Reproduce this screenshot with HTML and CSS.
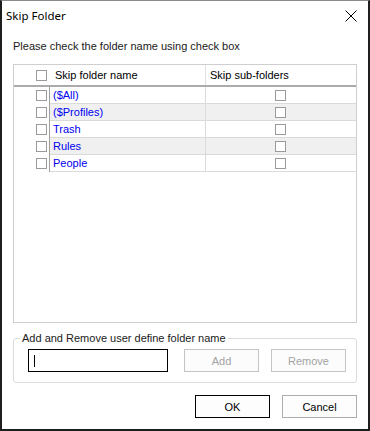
FILE: index.html
```html
<!DOCTYPE html>
<html>
<head>
<meta charset="utf-8">
<link rel="stylesheet" href="styles.css">
</head>
<body>
<div class="window">
  <div class="titlebar">
    <span class="title">Skip Folder</span>
    <svg class="close" width="12" height="12" viewBox="0 0 12 12"><path d="M0.5 0.5 L11.5 11.5 M11.5 0.5 L0.5 11.5" stroke="#000" stroke-width="1" fill="none"/></svg>
  </div>
  <div class="content">
    <div class="intro">Please check the folder name using check box</div>
    <div class="grid">
      <div class="row head">
        <div class="rh"><span class="cb"></span></div>
        <div class="c name">Skip folder name</div>
        <div class="c sub">Skip sub-folders</div>
      </div>
      <div class="row">
        <div class="rh"><span class="cb"></span></div>
        <div class="c name">($All)</div>
        <div class="c sub"><span class="cb"></span></div>
      </div>
      <div class="row alt">
        <div class="rh"><span class="cb"></span></div>
        <div class="c name">($Profiles)</div>
        <div class="c sub"><span class="cb"></span></div>
      </div>
      <div class="row">
        <div class="rh"><span class="cb"></span></div>
        <div class="c name">Trash</div>
        <div class="c sub"><span class="cb"></span></div>
      </div>
      <div class="row alt">
        <div class="rh"><span class="cb"></span></div>
        <div class="c name">Rules</div>
        <div class="c sub"><span class="cb"></span></div>
      </div>
      <div class="row">
        <div class="rh"><span class="cb"></span></div>
        <div class="c name">People</div>
        <div class="c sub"><span class="cb"></span></div>
      </div>
    </div>
    <fieldset class="group">
      <legend>Add and Remove user define folder name</legend>
      <div class="group-row">
        <div class="input"><span class="caret"></span></div>
        <button class="btn disabled add">Add</button>
        <button class="btn disabled remove">Remove</button>
      </div>
    </fieldset>
    <div class="actions">
      <button class="btn default">OK</button>
      <button class="btn">Cancel</button>
    </div>
  </div>
</div>
</body>
</html>
```
FILE: styles.css
```css
* { box-sizing: border-box; }
html, body { margin: 0; padding: 0; background: #fff; }
body { font-family: "Liberation Sans", Arial, sans-serif; font-size: 11px; color: #000; }

.window {
  width: 370px;
  height: 431px;
  border: 2px solid #1e1e1e;
  border-top: 1px solid #8a8a8a;
  background: #fff;
}

.titlebar {
  height: 29px;
  display: flex;
  align-items: center;
  justify-content: space-between;
  padding: 0 11px 0 4px;
}
.title {
  font-family: "Noto Sans", "Liberation Sans", sans-serif;
  font-size: 11.5px;
  color: #000;
}
.close { display: block; }

.content { padding: 0 11px; }

.intro {
  margin-top: 10px;
  line-height: 13px;
  height: 13px;
  color: #1a1a1a;
}

.grid {
  margin-top: 11px;
  height: 259px;
  border: 1px solid #cfcfcf;
  background: #fff;
}

.row {
  display: grid;
  grid-template-columns: 36px 156px 150px;
  height: 17px;
}
.row.head {
  height: 22px;
  border-bottom: 2px solid #ababab;
}
.rh {
  display: flex;
  align-items: center;
  padding-left: 22px;
  border-right: 1px solid #a0a0a0;
  background: #fff;
}
.head .rh { border-right: none; }
.c {
  display: flex;
  align-items: center;
  border-bottom: 1px solid #dadada;
  line-height: 16px;
}
.head .c { border-bottom: none; }
.name {
  padding-left: 3px;
  border-right: 1px solid #dadada;
  color: #0000f0;
}
.head .name { padding-left: 5px; color: #000; border-right: 1px solid #e0e0e0; }
.sub { justify-content: center; }
.head .sub { justify-content: flex-start; padding-left: 4px; color: #000; }
.alt .c { background: #f0f0f0; }

.cb {
  display: block;
  width: 11px;
  height: 11px;
  border: 1px solid #9a9a9a;
  background: #fff;
}
.sub .cb { margin-left: -2px; }

.group {
  margin: 9px 0 0 0;
  padding: 4px 9px 10px 6px;
  border: 1px solid #dcdcdc;
  border-radius: 3px;
  min-width: 0;
}
.group legend {
  padding: 0 2px;
  margin-left: 0;
  line-height: 13px;
  color: #1a1a1a;
}
.group-row {
  display: flex;
  align-items: center;
  padding-left: 8px;
}
.input {
  width: 140px;
  height: 23px;
  border: 1px solid #000;
  background: #fff;
  display: flex;
  align-items: center;
  padding-left: 5px;
}
.caret {
  display: block;
  width: 1px;
  height: 12px;
  background: #000;
}

.btn {
  font-family: "Liberation Sans", Arial, sans-serif;
  font-size: 11px;
  width: 75px;
  height: 23px;
  border: 1px solid #adadad;
  background: #fdfdfd;
  color: #000;
  padding: 0;
  margin: 0;
}
.btn.disabled {
  border-color: #c4c4c4;
  color: #a3a3a3;
  background: #fcfcfc;
}
.btn.add { margin-left: 16px; }
.btn.remove { margin-left: 12px; }
.btn.default { border-color: #000; }

.actions {
  margin-top: 12px;
  display: flex;
  justify-content: flex-end;
  gap: 12px;
}
```
